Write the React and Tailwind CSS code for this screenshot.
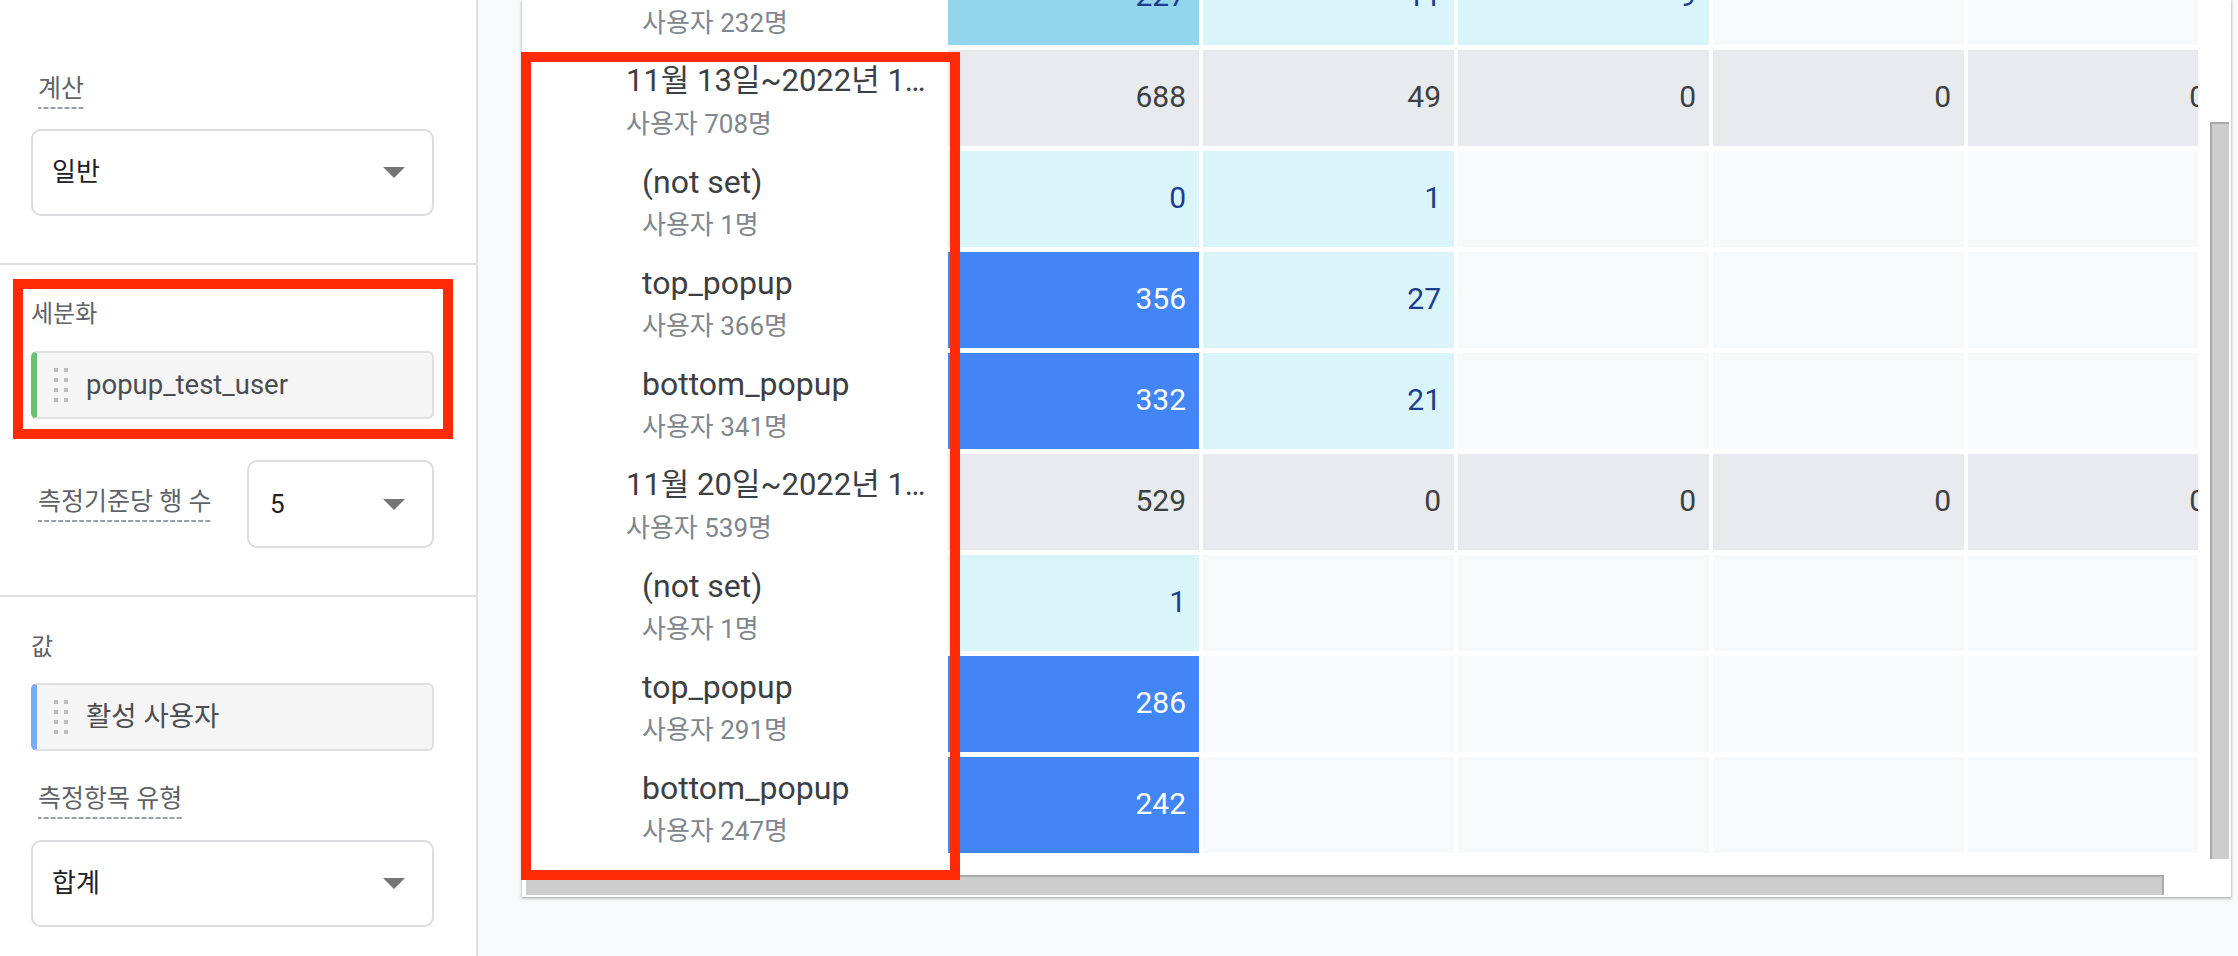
import React from "react";

const CELL = {
  lb: "bg-[#93d5ed] text-[#1d3c8f]",
  cy: "bg-[#daf5f9] text-[#1d3c8f]",
  b: "bg-[#4285f4] text-white",
  g: "bg-[#e8eaed] text-[#3c4043]",
  e: "bg-[#f8f9fa]",
};

const e = { t: "e" };

const ROWS = [
  { label: "bottom_popup", sub: "사용자 232명", cells: [{ v: "227", t: "lb" }, { v: "11", t: "cy" }, { v: "9", t: "cy" }, e, e] },
  { group: true, label: "11월 13일~2022년 11월 19일", sub: "사용자 708명", cells: [{ v: "688", t: "g" }, { v: "49", t: "g" }, { v: "0", t: "g" }, { v: "0", t: "g" }, { v: "0", t: "g" }] },
  { label: "(not set)", sub: "사용자 1명", cells: [{ v: "0", t: "cy" }, { v: "1", t: "cy" }, e, e, e] },
  { label: "top_popup", sub: "사용자 366명", cells: [{ v: "356", t: "b" }, { v: "27", t: "cy" }, e, e, e] },
  { label: "bottom_popup", sub: "사용자 341명", cells: [{ v: "332", t: "b" }, { v: "21", t: "cy" }, e, e, e] },
  { group: true, label: "11월 20일~2022년 11월 26일", sub: "사용자 539명", cells: [{ v: "529", t: "g" }, { v: "0", t: "g" }, { v: "0", t: "g" }, { v: "0", t: "g" }, { v: "0", t: "g" }] },
  { label: "(not set)", sub: "사용자 1명", cells: [{ v: "1", t: "cy" }, e, e, e, e] },
  { label: "top_popup", sub: "사용자 291명", cells: [{ v: "286", t: "b" }, e, e, e, e] },
  { label: "bottom_popup", sub: "사용자 247명", cells: [{ v: "242", t: "b" }, e, e, e, e] },
];

function Arrow() {
  return (
    <svg width="22" height="11" viewBox="0 0 22 11" className="shrink-0">
      <path d="M0 0h22L11 11z" fill="#757575" />
    </svg>
  );
}

function Select({ value, className = "" }) {
  return (
    <div className={`flex items-center justify-between rounded-[10px] border-2 border-[#dadce0] bg-white pr-[27px] text-[26px] text-[#202124] ${className}`}>
      <span>{value}</span>
      <Arrow />
    </div>
  );
}

function DashLabel({ children }) {
  return (
    <span className="inline-block bg-[linear-gradient(to_right,#9aa0a6_72%,transparent_0)] bg-[length:7px_2px] bg-bottom bg-repeat-x pb-[5px] text-[25px] leading-[30px] text-[#5f6368]">
      {children}
    </span>
  );
}

function Chip({ children, accent }) {
  return (
    <div className={`flex h-[68px] items-center rounded-[6px] border-2 border-l-[6px] border-[#e0e0e0] bg-[#f5f5f5] pl-[17px] ${accent}`}>
      <div className="grid grid-cols-2 gap-x-[6px] gap-y-[6px]">
        {Array.from({ length: 8 }).map((_, i) => (
          <span key={i} className="h-[4px] w-[4px] bg-[#bdbdbd]" />
        ))}
      </div>
      <span className="ml-[18px] text-[27.5px] text-[#4a4d51]">{children}</span>
    </div>
  );
}

function Row({ row }) {
  return (
    <div className="flex h-[96px]">
      <div className={`flex w-[426px] shrink-0 flex-col bg-white pt-[11px] ${row.group ? "pl-[104px] pr-[18px]" : "pl-[120px] pr-[12px]"}`}>
        <div className={`truncate leading-[40px] text-[#3c4043] ${row.group ? "text-[31px]" : "text-[32px]"}`}>{row.label}</div>
        <div className="mt-[3px] text-[26px] leading-[40px] text-[#80868b]">{row.sub}</div>
      </div>
      <div className="flex gap-[4px]">
        {row.cells.map((c, i) => (
          <div key={i} className={`flex w-[251px] shrink-0 items-center justify-end pr-[13px] pb-[4px] text-[30px] ${CELL[c.t]}`}>
            {c.v}
          </div>
        ))}
      </div>
    </div>
  );
}

export default function App() {
  return (
    <div className="relative flex h-[956px] w-[2238px] overflow-hidden bg-[#f8f9fa] font-[Roboto,'Noto_Sans_CJK_KR',sans-serif]">
      {/* settings panel */}
      <aside className="w-[478px] shrink-0 border-r-2 border-[#e0e0e0] bg-white">
        <section className="border-b-2 border-[#e0e0e0] pt-[74px] pb-[47px] pl-[31px] pr-[42px]">
          <div className="pl-[7px]">
            <DashLabel>계산</DashLabel>
          </div>
          <Select value="일반" className="mt-[20px] h-[87px] pl-[19px]" />
        </section>

        <section className="border-b-2 border-[#e0e0e0] pt-[34px] pb-[47px] pl-[31px] pr-[42px]">
          <div className="text-[24px] leading-[30px] text-[#5f6368]">세분화</div>
          <div className="mt-[22px]">
            <Chip accent="border-l-[#6fbf73]">popup_test_user</Chip>
          </div>
          <div className="mt-[41px] flex items-center justify-between">
            <div className="pl-[7px]">
              <DashLabel>측정기준당 행 수</DashLabel>
            </div>
            <Select value="5" className="h-[88px] w-[187px] pl-[21px]" />
          </div>
        </section>

        <section className="pt-[35px] pl-[31px] pr-[42px]">
          <div className="text-[24px] leading-[30px] text-[#5f6368]">값</div>
          <div className="mt-[21px]">
            <Chip accent="border-l-[#7baaf7]">활성 사용자</Chip>
          </div>
          <div className="mt-[33px] pl-[7px]">
            <DashLabel>측정항목 유형</DashLabel>
          </div>
          <Select value="합계" className="mt-[21px] h-[87px] pl-[19px]" />
        </section>
      </aside>

      {/* report table */}
      <main className="flex-1 pl-[44px] pr-[7px]">
        <div className="h-[897px] bg-white shadow-[0_1px_2px_rgba(60,64,67,0.35),0_1px_3px_1px_rgba(60,64,67,0.15)]">
          <div className="flex h-[875px]">
            <div className="h-full w-[1676px] shrink-0 overflow-hidden">
              <div className="-mt-[51px] flex flex-col gap-[5px]">
                {ROWS.map((r, i) => (
                  <Row key={i} row={r} />
                ))}
              </div>
            </div>
            <div className="flex-1">
              <div className="ml-[12px] mt-[122px] h-[737px] w-[19px] border-l-2 border-t-2 border-[#a9a9a9] bg-[#cdcdcd]" />
            </div>
          </div>
          <div className="ml-[4px] h-[20px] w-[1638px] border-t-2 border-r-2 border-[#a9a9a9] bg-[#cdcdcd]" />
        </div>
      </main>

      {/* red annotation boxes */}
      <div className="absolute left-[13px] top-[279px] h-[160px] w-[440px] border-[10px] border-[#ff2a06]" />
      <div className="absolute left-[521px] top-[52px] h-[828px] w-[439px] border-[10px] border-[#ff2a06]" />
    </div>
  );
}
